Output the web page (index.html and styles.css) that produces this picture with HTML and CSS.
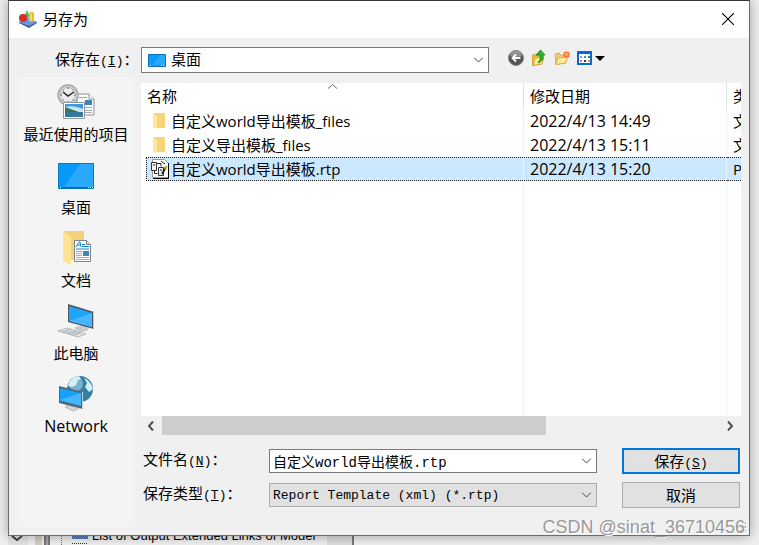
FILE: index.html
```html
<!DOCTYPE html>
<html lang="zh-CN">
<head>
  <meta charset="UTF-8" />
  <meta name="viewport" content="width=device-width, initial-scale=1" />
  <title>另存为</title>
  <link rel="stylesheet" href="styles.css">
</head>
<body>
  <form class="dialog">
    <header class="titlebar">
      <svg width="20" height="18" viewBox="0 0 20 18">
        <path d="M1 12l8-5 10 5-8 5z" fill="#6f97d6" />
        <path d="M1 12l10 4 8-4v1l-8 5-10-5z" fill="#315a9b" />
        <path d="M6 7l3-7 3 7z" fill="#58b848" />
        <circle cx="5" cy="8" r="4" fill="#d92c23" />
        <path d="M11 3q3-2 5 0v8q-3 2-5 0z" fill="#e8bd30" />
        <path d="M13 3v8" stroke="#fff0a0" />
      </svg>
      <h1>另存为</h1>
      <button type="button" class="close" aria-label="关闭">
        <svg width="12" height="12" viewBox="0 0 12 12"><path d="M0 0l12 12M12 0L0 12" stroke="#000" stroke-width="1.1" /></svg>
      </button>
    </header>

    <div class="lookin">
      <label for="folder">保存在<span class="key">(<u>I</u>)</span>：</label>
      <div class="combo combo-folder">
        <svg class="combo-icon" width="18" height="13" viewBox="0 0 18 13">
          <path d="M.5.5h17v12H.5z" fill="#0c9cf8" stroke="#0874bd" />
          <path d="M12 1h5v10H5z" fill="#2ba8ff" />
          <path d="M2 11.5h1m10 0h1m1 0h1" stroke="#fff" />
        </svg>
        <select id="folder"><option>桌面</option></select>
        <svg class="chevron" width="9" height="6" viewBox="0 0 9 6"><path d="M0 .5L4.500 5 9 .5" /></svg>
      </div>
      <div class="tools">
        <button type="button" aria-label="后退">
          <svg width="16" height="16" viewBox="0 0 16 16">
            <circle cx="8" cy="8" r="7.500" fill="#555" stroke="#858585" />
            <path d="M2 6a6 6 0 0 1 12 0q-6 2-12 0z" fill="#929292" />
            <path d="M12.500 8H4m4-3.500L4.500 8 8 11.500" fill="none" stroke="#fff" stroke-width="1.800" />
          </svg>
        </button>
        <button type="button" aria-label="向上一级">
          <svg width="16" height="16" viewBox="0 0 16 16">
            <path d="M1.500 5l3-1 1 1h5v9l-9 1.500z" fill="#e8bd3f" stroke="#d0a536" />
            <path d="M4 8l9-1-2 7-9 1.500z" fill="#ffed91" stroke="#d1a735" />
            <path d="M7 13q3-3 2-8H5l4.500-5L14 5h-2q1 6-5 8z" fill="#31b52d" stroke="#167317" stroke-width=".8" />
          </svg>
        </button>
        <button type="button" aria-label="新建文件夹">
          <svg width="16" height="16" viewBox="0 0 16 16">
            <path d="M1 4l4-1 1 2h6v8l-10 1.500z" fill="#f0cd6c" stroke="#d9b04e" />
            <path d="M4 8l10-1-3 6-9 1.500z" fill="#ffed9e" stroke="#dcb556" />
            <path d="M12.500 1v7M9 4.500h7M10 2l5 5m0-5l-5 5" stroke="#f26b32" stroke-width="1.300" />
            <circle cx="12.500" cy="4.500" r="1.300" fill="#ffdd60" />
          </svg>
        </button>
        <button type="button" class="views" aria-label="查看">
          <svg width="28" height="16" viewBox="0 0 28 16">
            <path d="M1 2h13v12H1z" fill="#fff" stroke="#0869d2" stroke-width="2" />
            <path d="M0 1h15v3H0z" fill="#0869d2" />
            <path d="M3 6h2v2H3z" fill="#999cc0" /><path d="M7 6h2v2H7z" fill="#4882d0" /><path d="M11 6h2v2h-2z" fill="#24963b" />
            <path d="M3 10h2v2H3z" fill="#ed7355" /><path d="M7 10h2v2H7z" fill="#173e91" /><path d="M11 10h2v2h-2z" fill="#dba822" />
            <path d="M18 6h10l-5 5z" fill="#000" />
          </svg>
        </button>
      </div>
    </div>

    <div class="main">
      <nav class="places">
        <a href="#recent">
          <svg width="38" height="36" viewBox="0 0 38 36">
            <path d="M20 10h12l5 5v16H20z" fill="#f7f7f7" stroke="#8e9499" />
            <path d="M32 10v5h5" fill="#fff" stroke="#8e9499" />
            <path d="M28 16h7v5h-7z" fill="#3f83b9" />
            <path d="M26 23.500h9m-9 3h9m-9 2h9M22 13.500h8" stroke="#a9a9a9" />
            <circle cx="11" cy="11" r="10" fill="#d0d4d6" stroke="#a2a8ac" stroke-width="1.500" />
            <circle cx="11" cy="11" r="7.500" fill="#e9ebec" stroke="#b8bdc0" />
            <path d="M11 3v2m0 12v2M3 11h2m12 0h2M5.500 5.500l1 1m9 9l1 1m0-11l-1 1m-9 9l-1 1" stroke="#666" />
            <path d="M6 8l5 4 6-4" fill="none" stroke="#222" stroke-width="1.500" />
            <path d="M6.500 18.500h21v16h-21z" fill="#fff" stroke="#999" />
            <path d="M8 20h18v13H8z" fill="#3e9add" />
            <path d="M8 23q9-2 18 2v4H8z" fill="#c8e5ed" />
            <path d="M8 23q8 3 14 5H8z" fill="#39715a" />
            <path d="M8 28h18v5H8z" fill="#35799b" />
          </svg>
          最近使用的项目
        </a>
        <a href="#desktop">
          <svg width="36" height="36" viewBox="0 0 36 36">
            <path d="M.5 6.500h35v25H.5z" fill="#0999fa" stroke="#087abd" />
            <path d="M22 7h13v23H6z" fill="#2ba8ff" />
            <path d="M1 30.500h34" stroke="#0868a8" />
            <path d="M2 30.500h1m27 0h1m1 0h1m1 0h1" stroke="#fff" />
          </svg>
          桌面
        </a>
        <a href="#documents">
          <svg width="36" height="36" viewBox="0 0 36 36">
            <path d="M5 1h21v29H5z" fill="#f4d27a" />
            <path d="M5 1l8 6v28l-8-4z" fill="#ffe495" />
            <path d="M16.500 10.500h12l4 4v17h-16z" fill="#fff" stroke="#7d858c" />
            <path d="M28.500 10.500v4h4" fill="#ddd" stroke="#7d858c" />
            <path d="M18 17l3-5h1l1 5m-4-2h3M24 14.500h3m-3 2h7M18 19h13" fill="none" stroke="#1687ca" />
            <path d="M18 21.500h6m-6 2h6m-6 2h6m-6 2h13m-13 2h13" stroke="#aaa" />
            <path d="M25 21h6v5h-6z" fill="#4085b2" />
          </svg>
          文档
        </a>
        <a href="#computer">
          <svg width="38" height="36" viewBox="0 0 38 36">
            <path d="M18 24l8-2 6 3-2 3-6 1-6-3z" fill="#c5ccd1" />
            <path d="M11 1l26 8v17l-26-7z" fill="#4d565d" />
            <path d="M12 3l23 7v14l-23-6z" fill="#1da4fb" />
            <path d="M12 18L35 10v14z" fill="#48b6ff" />
            <path d="M36 8l1 .5V26l-1-.5z" fill="#c6cdd1" />
            <path d="M1 28l9-3 19 6-8 3z" fill="#e8eaec" stroke="#b2b8bc" />
            <path d="M5 28l16 4M8 27l16 4M6 29l8-3m-3 5l8-3m-3 4l8-3" stroke="#9fa7ad" stroke-width=".7" />
          </svg>
          此电脑
        </a>
        <a href="#network">
          <svg width="36" height="36" viewBox="0 0 36 36">
            <circle cx="22" cy="13" r="13" fill="#347fa5" />
            <circle cx="18" cy="8" r="7" fill="#79b3cb" />
            <path d="M11 6l5-5 5-1 2 3-3 1-2 5-4 2-4-1zM26 2q7 3 9 11l-4 3-4-5 2-4z" fill="#d6eff2" />
            <path d="M7 31l6-3 8 2-1 3-5 2z" fill="#d0d6da" stroke="#aeb7bd" />
            <path d="M1 10l24 6v17L1 27z" fill="#55636d" />
            <path d="M2 12l21 5v13L2 25z" fill="#18a1f8" />
            <path d="M2 24l21-7v13z" fill="#47b5ff" />
            <path d="M24 15.500l1 .5v17l-1-.5z" fill="#cbd2d7" />
          </svg>
          <span class="latin">Network</span>
        </a>
      </nav>

      <div class="content">
        <div class="listing">
          <svg class="sort" width="9" height="5" viewBox="0 0 9 5"><path d="M0 4.500L4.500.5 9 4.500" fill="none" stroke="#666" /></svg>
          <table>
            <colgroup>
              <col>
              <col class="col-date">
              <col class="col-type">
            </colgroup>
            <thead>
              <tr><th>名称</th><th>修改日期</th><th>类型</th></tr>
            </thead>
            <tbody>
              <tr>
                <td>
                  <div class="name">
                    <svg width="20" height="18" viewBox="0 0 20 18"><path d="M4 1h11v15H4z" fill="#f5d47c" /><path d="M3 1l4 3v13l-4-2z" fill="#ffe69d" /></svg>
                    自定义world导出模板_files
                  </div>
                </td>
                <td class="latin">2022/4/13 14:49</td>
                <td>文件夹</td>
              </tr>
              <tr>
                <td>
                  <div class="name">
                    <svg width="20" height="18" viewBox="0 0 20 18"><path d="M4 1h11v15H4z" fill="#f5d47c" /><path d="M3 1l4 3v13l-4-2z" fill="#ffe69d" /></svg>
                    自定义导出模板_files
                  </div>
                </td>
                <td class="latin">2022/4/13 15:11</td>
                <td>文件夹</td>
              </tr>
              <tr class="selected">
                <td>
                  <div class="name">
                    <svg width="20" height="20" viewBox="0 0 20 20">
                      <path d="M2.500.5h12l4 4v14h-16z" fill="#fff" stroke="#999" />
                      <path d="M18.500 4v15.500H3" fill="none" stroke="#000" />
                      <path d="M1.500 3.500h5v8h-5zM8.500 8.500h5v8h-5z" fill="#eee" stroke="#333" />
                      <path d="M7 4.500h4v3M4.500 12v2.500h3M11 2l4 3M3 6h2M10 11h2" fill="none" stroke="#222" />
                      <path d="M12 15l4-7" stroke="#222" stroke-width="2" />
                      <path d="M15 10l2-3" stroke="#c9b200" stroke-width="2" />
                    </svg>
                    自定义world导出模板.rtp
                  </div>
                </td>
                <td class="latin">2022/4/13 15:20</td>
                <td>PRT</td>
              </tr>
              <tr class="filler"><td></td><td></td><td></td></tr>
            </tbody>
          </table>
        </div>
        <div class="scrollbar">
          <svg width="7" height="10" viewBox="0 0 7 10"><path d="M6 .5L2 5l4 4.500" /></svg>
          <div class="track"><div class="thumb"></div></div>
          <svg width="7" height="10" viewBox="0 0 7 10"><path d="M1 .5L5 5 1 9.500" /></svg>
        </div>

        <div class="fields">
          <label for="filename">文件名<span class="key">(<u>N</u>)</span>：</label>
          <div class="combo">
            <input type="text" id="filename" value="自定义world导出模板.rtp">
            <svg class="chevron" width="9" height="6" viewBox="0 0 9 6"><path d="M0 .5L4.500 5 9 .5" /></svg>
          </div>
          <button type="submit" class="btn primary">保存<span class="key">(<u>S</u>)</span></button>
          <label for="filetype">保存类型<span class="key">(<u>T</u>)</span>：</label>
          <div class="combo">
            <select id="filetype" class="filetype"><option>Report Template (xml) (*.rtp)</option></select>
            <svg class="chevron" width="9" height="6" viewBox="0 0 9 6"><path d="M0 .5L4.500 5 9 .5" /></svg>
          </div>
          <button type="button" class="btn">取消</button>
        </div>
      </div>
    </div>
    <svg class="grip" width="10" height="10" viewBox="0 0 10 10">
      <path d="M7 0h2v2H7zM7 4h2v2H7zM3 4h2v2H3zM7 8h2v2H7zM3 8h2v2H3z" fill="#b5b5b5" />
    </svg>
  </form>

  <div class="behind">
    <svg width="84" height="9" viewBox="0 0 84 9">
      <path d="M0 0h20v9H0z" fill="#e5e5e5" />
      <path d="M4 0l5 4 5-4" fill="none" stroke="#444" stroke-width="2" />
      <path d="M27 0h7v9h-7z" fill="#d4cfc8" />
      <path d="M36 0h6v9h-6z" fill="#777" />
      <path d="M38 0h2v9h-2z" fill="#aaa" />
      <path d="M53.500 0v9" stroke="#777" stroke-dasharray="1 1" />
      <path d="M64 0h16v3H64z" fill="#5a7fba" />
      <path d="M64 7.500h16" stroke="#333" stroke-dasharray="1 1" />
    </svg>
    <span>List of Output Extended Links of Model</span>
    <i class="pane-edge"></i>
  </div>
  <div class="watermark">CSDN @sinat_36710456</div>
</body>
</html>
```
FILE: styles.css
```css
* {
  box-sizing: border-box;
}
body {
  margin: 0;
  height: 100vh;
  display: flex;
  flex-direction: column;
  position: relative;
  overflow: hidden;
  background: #f0f0f0;
  color: #000;
  font: 15px "Open Sans", "Noto Sans CJK SC", sans-serif;
}
button,
input,
select {
  font: inherit;
  color: inherit;
}
svg {
  display: block;
  flex: none;
}
.dialog {
  flex: 1;
  min-height: 0;
  margin: 0 9px 0 8px;
  position: relative;
  display: flex;
  flex-direction: column;
  background: #f0f0f0;
  border: 1px solid #6b6b6b;
  border-top-color: #3b3738;
  box-shadow: 0 0 12px rgba(0, 0, 0, 0.35);
}
.titlebar {
  display: flex;
  align-items: center;
  height: 37px;
  padding: 0 15px 2px 9px;
  gap: 5px;
  background: #fff;
}
.titlebar h1 {
  flex: 1;
  margin: 0;
  font-size: 15px;
  font-weight: normal;
}
.close {
  padding: 0;
  border: 0;
  background: none;
}
.lookin {
  display: flex;
  align-items: center;
  height: 45px;
  padding: 0 8px 5px 46px;
}
.lookin label {
  width: 86px;
  white-space: nowrap;
}
.key {
  font-family: "Liberation Mono", monospace;
  font-size: 13px;
}
.latin {
  font-size: 16px;
}
.combo {
  position: relative;
  display: flex;
}
.combo input,
.combo select {
  width: 100%;
  height: 24px;
  padding: 0 20px 0 3px;
  border: 1px solid #7a7a7a;
  border-radius: 0;
  background: #fff;
  appearance: none;
  outline: 0;
}
.combo input {
  font: 14px "Liberation Mono", "Noto Sans CJK SC", monospace;
}
.combo .filetype {
  background: #e1e1e1;
  border-color: #adadad;
  font: 13px "Liberation Mono", monospace;
}
.combo-folder {
  flex: 1;
  margin-top: 4px;
}
.combo-folder select {
  height: 26px;
  padding: 0 20px 2px 29px;
}
.combo-icon {
  position: absolute;
  left: 7px;
  top: 7px;
}
.chevron {
  position: absolute;
  right: 6px;
  top: 50%;
  margin-top: -3px;
  fill: none;
  stroke: #444;
  pointer-events: none;
}
.tools {
  display: flex;
  gap: 7px;
  width: 252px;
  padding-left: 19px;
}
.tools button {
  padding: 0;
  border: 0;
  background: none;
}
.main {
  flex: 1;
  min-height: 0;
  display: flex;
  gap: 6px;
  padding: 0 8px 8px;
}
.places {
  width: 118px;
  margin-top: -6px;
  padding-top: 7px;
  display: flex;
  flex-direction: column;
  gap: 12px;
  background: #f4f4f4;
}
.places a {
  display: flex;
  flex-direction: column;
  align-items: center;
  gap: 3px;
  line-height: 22px;
  color: #000;
  text-decoration: none;
  white-space: nowrap;
}
.content {
  flex: 1;
  min-width: 0;
  display: flex;
  flex-direction: column;
}
.listing {
  flex: 1;
  min-height: 0;
  position: relative;
  overflow: hidden;
  background: #fff;
}
.sort {
  position: absolute;
  left: 50%;
  top: 1px;
  margin-left: -113px;
}
table {
  width: 100%;
  height: 100%;
  table-layout: fixed;
  border-collapse: separate;
  border-spacing: 0;
}
.col-date {
  width: 203px;
}
.col-type {
  width: 14px;
}
th,
td {
  height: 24px;
  padding: 0 0 0 6px;
  border-right: 1px solid #eaf2fb;
  overflow: hidden;
  white-space: nowrap;
  text-align: left;
  font-weight: normal;
  line-height: 22px;
}
th {
  height: 26px;
  border-right-color: #e0e0e0;
}
th:last-child,
td:last-child {
  border-right: 0;
}
td:first-child {
  padding-left: 5px;
}
.name {
  display: flex;
  align-items: center;
  gap: 1px;
  height: 22px;
  padding-left: 4px;
}
.selected td {
  background: #cce8ff;
  border-top: 1px dotted #222;
  border-bottom: 1px dotted #222;
}
.selected td:first-child {
  background: none;
  border-top: 0;
  border-bottom: 0;
}
.selected .name {
  height: 24px;
  padding-left: 3px;
  background: #cce8ff;
  border: 1px dotted #222;
  border-right: 0;
}
.filler td {
  height: auto;
}
.scrollbar {
  display: flex;
  align-items: center;
  gap: 8px;
  height: 19px;
  padding: 0 7px 0 6px;
}
.scrollbar svg {
  fill: none;
  stroke: #505050;
  stroke-width: 2;
}
.track {
  flex: 1;
  height: 19px;
}
.thumb {
  width: 69%;
  height: 100%;
  background: #cdcdcd;
}
.fields {
  display: grid;
  grid-template-columns: 126px 1fr 118px;
  row-gap: 8px;
  align-items: center;
  padding: 13px 1px 19px 2px;
}
.fields label {
  line-height: 20px;
  padding-bottom: 2px;
}
.fields .combo {
  margin-right: 25px;
}
.btn {
  height: 26px;
  padding: 0 0 2px;
  border: 1px solid #adadad;
  background: #e1e1e1;
}
.btn.primary {
  border: 2px solid #0078d7;
}
.grip {
  position: absolute;
  right: 2px;
  bottom: 3px;
}
.behind {
  display: flex;
  align-items: flex-end;
  height: 9px;
  padding-left: 8px;
  overflow: hidden;
  font: 13px/16px "Liberation Sans", sans-serif;
}
.behind span {
  margin: 0 12px 1px 0;
  white-space: nowrap;
}
.pane-edge {
  width: 27px;
  height: 9px;
  background: #dedede;
  border-right: 2px solid #777;
}
.watermark {
  position: absolute;
  right: 14px;
  bottom: 5px;
  font: 18px/26px "Liberation Sans", sans-serif;
  color: #999;
  text-shadow: 1px 1px 0 #fff;
}
```
